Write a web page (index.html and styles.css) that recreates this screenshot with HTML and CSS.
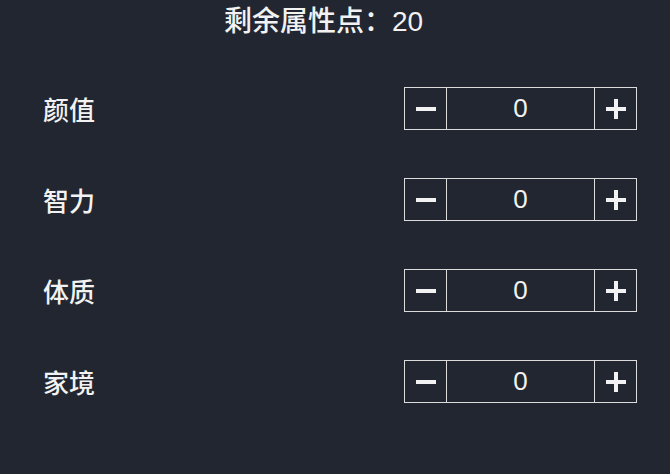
FILE: index.html
```html
<!DOCTYPE html>
<html lang="zh-CN">
<head>
    <meta charset="UTF-8">
    <meta name="viewport" content="width=device-width, initial-scale=1.0">
    <title>属性分配</title>
    <link rel="stylesheet" href="styles.css">
</head>
<body>
    <div class="attr-panel">
        <h2 class="points-left">剩余属性点：<span id="points">20</span></h2>

        <div class="attr-list">
            <div class="attr-row">
                <span class="attr-name">颜值</span>
                <div class="stepper">
                    <button class="step-btn minus" aria-label="减少">
                        <svg width="20" height="20" viewBox="0 0 20 20"><rect x="0" y="8" width="20" height="4" fill="#f2f2f2"/></svg>
                    </button>
                    <input class="step-value" type="text" value="0" readonly>
                    <button class="step-btn plus" aria-label="增加">
                        <svg width="20" height="20" viewBox="0 0 20 20"><rect x="0" y="8" width="20" height="4" fill="#f2f2f2"/><rect x="8" y="0" width="4" height="20" fill="#f2f2f2"/></svg>
                    </button>
                </div>
            </div>
            <div class="attr-row">
                <span class="attr-name">智力</span>
                <div class="stepper">
                    <button class="step-btn minus" aria-label="减少">
                        <svg width="20" height="20" viewBox="0 0 20 20"><rect x="0" y="8" width="20" height="4" fill="#f2f2f2"/></svg>
                    </button>
                    <input class="step-value" type="text" value="0" readonly>
                    <button class="step-btn plus" aria-label="增加">
                        <svg width="20" height="20" viewBox="0 0 20 20"><rect x="0" y="8" width="20" height="4" fill="#f2f2f2"/><rect x="8" y="0" width="4" height="20" fill="#f2f2f2"/></svg>
                    </button>
                </div>
            </div>
            <div class="attr-row">
                <span class="attr-name">体质</span>
                <div class="stepper">
                    <button class="step-btn minus" aria-label="减少">
                        <svg width="20" height="20" viewBox="0 0 20 20"><rect x="0" y="8" width="20" height="4" fill="#f2f2f2"/></svg>
                    </button>
                    <input class="step-value" type="text" value="0" readonly>
                    <button class="step-btn plus" aria-label="增加">
                        <svg width="20" height="20" viewBox="0 0 20 20"><rect x="0" y="8" width="20" height="4" fill="#f2f2f2"/><rect x="8" y="0" width="4" height="20" fill="#f2f2f2"/></svg>
                    </button>
                </div>
            </div>
            <div class="attr-row">
                <span class="attr-name">家境</span>
                <div class="stepper">
                    <button class="step-btn minus" aria-label="减少">
                        <svg width="20" height="20" viewBox="0 0 20 20"><rect x="0" y="8" width="20" height="4" fill="#f2f2f2"/></svg>
                    </button>
                    <input class="step-value" type="text" value="0" readonly>
                    <button class="step-btn plus" aria-label="增加">
                        <svg width="20" height="20" viewBox="0 0 20 20"><rect x="0" y="8" width="20" height="4" fill="#f2f2f2"/><rect x="8" y="0" width="4" height="20" fill="#f2f2f2"/></svg>
                    </button>
                </div>
            </div>
        </div>
    </div>
</body>
</html>
```

FILE: styles.css
```css
body {
    margin: 0;
    background: #212630;
    min-height: 100vh;
    font-family: "Liberation Sans", Arial, "Noto Sans CJK SC", sans-serif;
    color: #f2f2f2;
}

.attr-panel {
    padding-top: 4px;
}

.points-left {
    margin: 0;
    padding-right: 23px;
    text-align: center;
    font-size: 28px;
    font-weight: 500;
    line-height: 36px;
}

.attr-list {
    display: flex;
    flex-direction: column;
    gap: 48px;
    padding: 47px 33px 0 43px;
}

.attr-row {
    display: flex;
    justify-content: space-between;
    align-items: center;
    height: 43px;
}

.attr-name {
    font-size: 26px;
    font-weight: 500;
}

.stepper {
    display: flex;
    height: 43px;
    border: 1px solid #dcdcdc;
    box-sizing: border-box;
    width: 233px;
}

.step-btn {
    width: 41px;
    padding: 0;
    margin: 0;
    background: transparent;
    border: none;
    display: flex;
    justify-content: center;
    align-items: center;
    cursor: pointer;
}

.step-value {
    width: 149px;
    box-sizing: border-box;
    margin: 0;
    padding: 0;
    background: transparent;
    border: none;
    border-left: 1px solid #dcdcdc;
    border-right: 1px solid #dcdcdc;
    color: #f2f2f2;
    text-align: center;
    font-family: "Liberation Sans", Arial, sans-serif;
    font-size: 26px;
    outline: none;
}
```
